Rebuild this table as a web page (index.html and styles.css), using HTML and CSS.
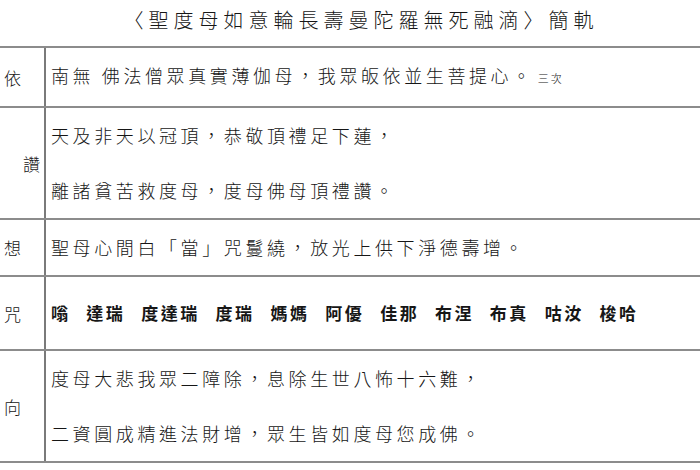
FILE: index.html
```html
<!DOCTYPE html>
<html lang="zh-Hant">
<head>
<meta charset="utf-8">
<title>聖度母如意輪長壽曼陀羅無死融滴 簡軌</title>
<link rel="stylesheet" href="styles.css">
</head>
<body>
<div class="sheet">
  <h1 class="title">〈聖度母如意輪長壽曼陀羅無死融滴〉簡軌</h1>
  <div class="table">
    <div class="row row-single">
      <div class="label">依</div>
      <div class="content"><span class="line">南無 佛法僧眾真實薄伽母，我眾皈依並生菩提心。<span class="note">三次</span></span></div>
    </div>
    <div class="row row-double">
      <div class="label label-center">讚</div>
      <div class="content">
        <span class="line">天及非天以冠頂，恭敬頂禮足下蓮，</span>
        <span class="line">離諸貧苦救度母，度母佛母頂禮讚。</span>
      </div>
    </div>
    <div class="row row-single">
      <div class="label">想</div>
      <div class="content"><span class="line">聖母心間白「當」咒鬘繞，放光上供下淨德壽增。</span></div>
    </div>
    <div class="row row-mantra">
      <div class="label">咒</div>
      <div class="content"><span class="line mantra">嗡 達瑞 度達瑞 度瑞 媽媽 阿優 佳那 布涅 布真 咕汝 梭哈</span></div>
    </div>
    <div class="row row-double">
      <div class="label">向</div>
      <div class="content">
        <span class="line">度母大悲我眾二障除，息除生世八怖十六難，</span>
        <span class="line">二資圓成精進法財增，眾生皆如度母您成佛。</span>
      </div>
    </div>
  </div>
</div>
</body>
</html>
```

FILE: styles.css
```css
html, body {
  margin: 0;
  padding: 0;
  background: #ffffff;
  overflow: hidden;
}

body {
  width: 700px;
  height: 470px;
  color: #161616;
  font-family: "Noto Sans CJK TC", "Noto Sans CJK SC", sans-serif;
}

.sheet {
  width: 740px;
}

.title {
  margin: 0;
  padding-top: 8px;
  height: 24px;
  margin-bottom: 14px;
  padding-right: 18px;
  font-size: 20px;
  line-height: 24px;
  font-weight: 300;
  letter-spacing: 5px;
  text-align: center;
}

.table {
  border-top: 2px solid #8c8c8c;
}

.row {
  display: flex;
  border-bottom: 2px solid #8c8c8c;
}

.label {
  width: 21px;
  padding-right: 23px;
  flex: none;
  border-right: 2px solid #7a7a7a;
  display: flex;
  align-items: center;
  justify-content: flex-end;
  font-size: 17px;
  font-weight: 300;
}

.label-center {
  width: 40px;
  padding-right: 4px;
}

.content {
  flex: 1;
  padding-left: 5px;
  display: flex;
  flex-direction: column;
  justify-content: center;
}

.line {
  display: block;
  font-size: 18px;
  font-weight: 300;
  letter-spacing: 3.6px;
  line-height: 55px;
  white-space: nowrap;
}

.row-mantra .line {
  line-height: 72px;
}

.mantra {
  font-weight: 700;
  font-size: 17px;
  letter-spacing: 2.5px;
  word-spacing: 9.5px;
}

.note {
  font-size: 11px;
  letter-spacing: 2px;
  margin-left: 4px;
}
```
